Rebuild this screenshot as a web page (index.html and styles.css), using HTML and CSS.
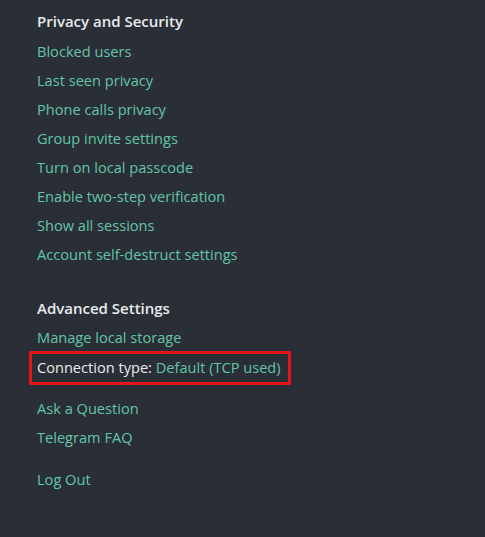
FILE: index.html
```html
<!DOCTYPE html>
<html lang="en">
<head>
    <meta charset="UTF-8">
    <meta name="viewport" content="width=device-width, initial-scale=1.0">
    <title>Settings</title>
    <link rel="stylesheet" href="styles.css">
</head>
<body>
    <div class="settings">
        <div class="section">
            <h3 class="title">Privacy and Security</h3>
            <a class="link first" href="#">Blocked users</a>
            <a class="link" href="#">Last seen privacy</a>
            <a class="link" href="#">Phone calls privacy</a>
            <a class="link" href="#">Group invite settings</a>
            <a class="link" href="#">Turn on local passcode</a>
            <a class="link" href="#">Enable two-step verification</a>
            <a class="link" href="#">Show all sessions</a>
            <a class="link" href="#">Account self-destruct settings</a>
        </div>

        <div class="section advanced">
            <h3 class="title">Advanced Settings</h3>
            <a class="link first storage" href="#">Manage local storage</a>
            <div class="connection">
                <span class="label">Connection type:</span> <a class="inline-link" href="#">Default (TCP used)</a>
            </div>
            <a class="link ask" href="#">Ask a Question</a>
            <a class="link" href="#">Telegram FAQ</a>
            <a class="link logout" href="#">Log Out</a>
        </div>
    </div>
</body>
</html>
```

FILE: styles.css
```css
body {
    margin: 0;
    background-color: #2a2e36;
    font-family: "Open Sans", "Noto Sans", sans-serif;
    font-size: 14.6px;
}

.settings {
    padding-top: 7px;
    padding-left: 37px;
}

.title {
    margin: 0;
    line-height: 29px;
    font-size: 15px;
    font-weight: 600;
    color: #e9ebed;
}

a {
    text-decoration: none;
}

.link {
    display: block;
    line-height: 29px;
    color: #63c5a8;
}

.link.first {
    margin-top: 1px;
}

.advanced {
    margin-top: 25px;
}

.storage {
    margin-top: 2px;
    line-height: 27px;
}

.connection {
    display: inline-block;
    margin-left: -8px;
    padding: 0 7px 2px 5px;
    border: 3px solid #e3161b;
    line-height: 26px;
    color: #e9ebed;
}

.inline-link {
    color: #63c5a8;
}

.ask {
    margin-top: 9px;
}

.logout {
    margin-top: 13px;
}
```
